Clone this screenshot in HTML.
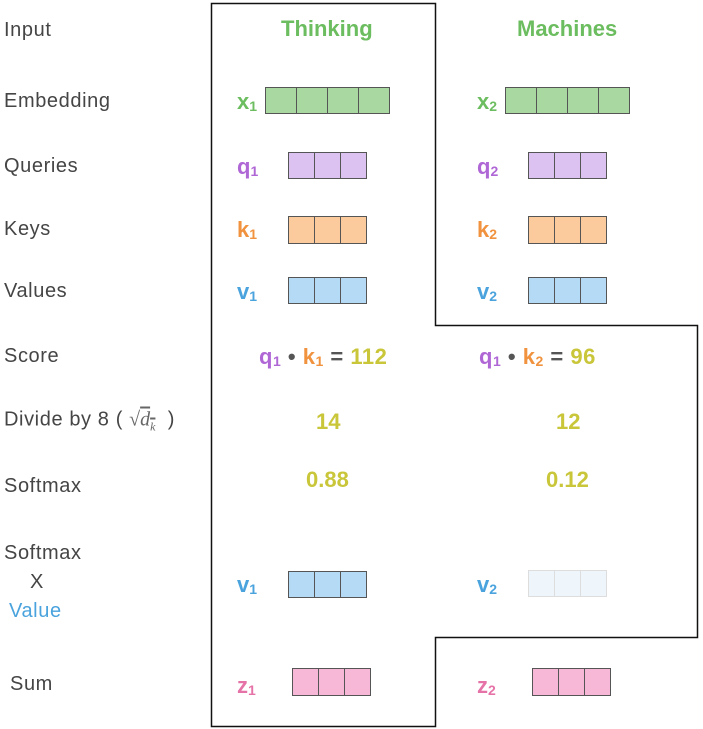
<!DOCTYPE html>
<html><head><meta charset="utf-8"><style>
body{margin:0;width:703px;height:729px;background:#fff;position:relative;overflow:hidden;font-family:"Liberation Sans",sans-serif}
.l{position:absolute;left:4px;font-size:20px;letter-spacing:0.6px;color:#454545;line-height:1;transform:translateY(-50%)}
.t{position:absolute;font-weight:bold;font-size:22px;line-height:1;transform:translateY(-50%)}
.t sub{font-size:14px;vertical-align:-2px;font-weight:bold}
.b{position:absolute;display:flex;border:1.5px solid #555;box-sizing:border-box}
.b i{flex:1;border-right:1.5px solid #555}
.b i:last-child{border-right:none}
.g{color:#6cbd5f}.p{color:#b067d6}.o{color:#f0923e}.bl{color:#4aa3dd}.y{color:#c9c63a}.pk{color:#e673a8}
</style></head><body>
<svg style="position:absolute;left:0;top:0" width="703" height="729"><path d="M211.5 3.5H435.5V325.5H697.5V637.5H435.5V726.5H211.5Z" fill="none" stroke="#111" stroke-width="1.5"/></svg>
<div class="l" style="top:30px">Input</div>
<div class="l" style="top:101px">Embedding</div>
<div class="l" style="top:166px">Queries</div>
<div class="l" style="top:229px">Keys</div>
<div class="l" style="top:291px">Values</div>
<div class="l" style="top:356px">Score</div>
<div class="l" style="top:421px">Divide by 8 ( <span style="font-family:'Liberation Serif',serif;font-style:italic;font-size:20px;color:#666;letter-spacing:0">√<span style="text-decoration:overline">d<sub style="font-size:12px">k</sub></span></span> &nbsp;)</div>
<div class="l" style="top:486px">Softmax</div>
<div class="l" style="top:553px">Softmax</div>
<div class="l" style="top:582px;left:30px">X</div>
<div class="l" style="top:611px;left:9px;color:#4aa3dd">Value</div>
<div class="l" style="top:684px;left:10px">Sum</div>

<div class="t g" style="left:281px;top:29px">Thinking</div>
<div class="t g" style="left:517px;top:29px">Machines</div>

<div class="t g" style="left:237px;top:102px">x<sub>1</sub></div>
<div class="b" style="left:265px;top:87px;width:125px;height:27px;background:#a9d9a0"><i></i><i></i><i></i><i></i></div>
<div class="t g" style="left:477px;top:102px">x<sub>2</sub></div>
<div class="b" style="left:505px;top:87px;width:125px;height:27px;background:#a9d9a0"><i></i><i></i><i></i><i></i></div>

<div class="t p" style="left:237px;top:167px">q<sub>1</sub></div>
<div class="b" style="left:288px;top:152px;width:79px;height:27px;background:#dcc2f0"><i></i><i></i><i></i></div>
<div class="t p" style="left:477px;top:167px">q<sub>2</sub></div>
<div class="b" style="left:528px;top:152px;width:79px;height:27px;background:#dcc2f0"><i></i><i></i><i></i></div>

<div class="t o" style="left:237px;top:230px">k<sub>1</sub></div>
<div class="b" style="left:288px;top:216px;width:79px;height:28px;background:#fbcb9e"><i></i><i></i><i></i></div>
<div class="t o" style="left:477px;top:230px">k<sub>2</sub></div>
<div class="b" style="left:528px;top:216px;width:79px;height:28px;background:#fbcb9e"><i></i><i></i><i></i></div>

<div class="t bl" style="left:237px;top:292px">v<sub>1</sub></div>
<div class="b" style="left:288px;top:277px;width:79px;height:27px;background:#b4daf5"><i></i><i></i><i></i></div>
<div class="t bl" style="left:477px;top:292px">v<sub>2</sub></div>
<div class="b" style="left:528px;top:277px;width:79px;height:27px;background:#b4daf5"><i></i><i></i><i></i></div>

<div class="t" style="left:259px;top:357px;letter-spacing:0.5px"><span class="p">q<sub>1</sub></span> <span style="color:#555">•</span> <span class="o">k<sub>1</sub></span> <span style="color:#555">=</span> <span class="y">112</span></div>
<div class="t" style="left:479px;top:357px;letter-spacing:0.5px"><span class="p">q<sub>1</sub></span> <span style="color:#555">•</span> <span class="o">k<sub>2</sub></span> <span style="color:#555">=</span> <span class="y">96</span></div>
<div class="t y" style="left:316px;top:422px">14</div>
<div class="t y" style="left:556px;top:422px">12</div>
<div class="t y" style="left:306px;top:480px">0.88</div>
<div class="t y" style="left:546px;top:480px">0.12</div>

<div class="t bl" style="left:237px;top:585px">v<sub>1</sub></div>
<div class="b" style="left:288px;top:571px;width:79px;height:27px;background:#b4daf5"><i></i><i></i><i></i></div>
<div class="t bl" style="left:477px;top:585px">v<sub>2</sub></div>
<div class="b" style="left:528px;top:570px;width:79px;height:27px;background:#eef5fb;border-color:#ddd"><i style="border-color:#ddd"></i><i style="border-color:#ddd"></i><i></i></div>

<div class="t pk" style="left:237px;top:686px">z<sub>1</sub></div>
<div class="b" style="left:292px;top:668px;width:79px;height:28px;background:#f6b8d6"><i></i><i></i><i></i></div>
<div class="t pk" style="left:477px;top:686px">z<sub>2</sub></div>
<div class="b" style="left:532px;top:668px;width:79px;height:28px;background:#f6b8d6"><i></i><i></i><i></i></div>
</body></html>
